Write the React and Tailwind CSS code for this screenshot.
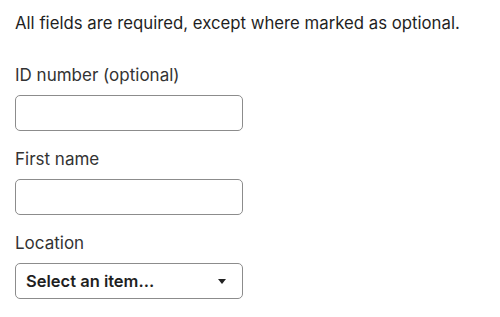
import { useState } from 'react';

function Field({ label, children }) {
  return (
    <div className="flex flex-col gap-2">
      <label className="text-[17px] leading-6 text-[#333]">{label}</label>
      {children}
    </div>
  );
}

export default function App() {
  const [idNumber, setIdNumber] = useState('');
  const [firstName, setFirstName] = useState('');

  return (
    <div
      className="bg-white px-[15px] pt-[11px] text-[#1a1a1a]"
      style={{ fontFamily: 'Inter, "Liberation Sans", sans-serif' }}
    >
      <p className="text-[16.75px] leading-6 text-[#1f1f1f]">
        All fields are required, except where marked as optional.
      </p>
      <div className="mt-7 flex flex-col gap-4">
        <Field label="ID number (optional)">
          <input
            value={idNumber}
            onChange={(e) => setIdNumber(e.target.value)}
            className="h-9 w-[228px] rounded-[5px] border border-[#8c8c8c] bg-white px-2.5 text-[16px] outline-none"
          />
        </Field>
        <Field label="First name">
          <input
            value={firstName}
            onChange={(e) => setFirstName(e.target.value)}
            className="h-9 w-[228px] rounded-[5px] border border-[#8c8c8c] bg-white px-2.5 text-[16px] outline-none"
          />
        </Field>
        <Field label="Location">
          <button className="flex h-9 w-[228px] items-center justify-between rounded-[5px] border border-[#8c8c8c] bg-white pl-2.5 pr-[16px] text-left">
            <span className="text-[16.5px] font-semibold text-[#1f1f1f]">
              Select an item...
            </span>
            <svg width="8" height="5" viewBox="0 0 8 5" className="mt-px">
              <path d="M0 0h8L4 5z" fill="#222" />
            </svg>
          </button>
        </Field>
      </div>
    </div>
  );
}
